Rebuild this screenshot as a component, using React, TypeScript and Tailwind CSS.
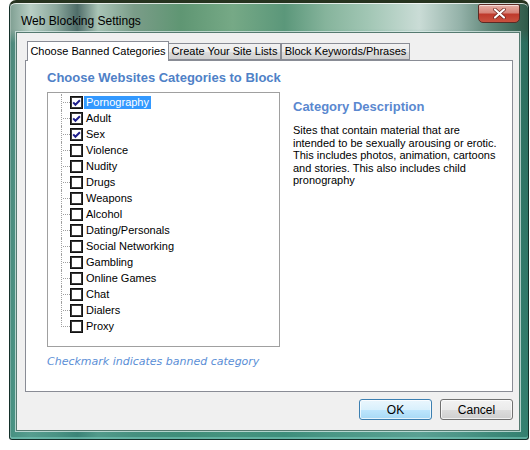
const categories = [
  "Pornography",
  "Adult",
  "Sex",
  "Violence",
  "Nudity",
  "Drugs",
  "Weapons",
  "Alcohol",
  "Dating/Personals",
  "Social Networking",
  "Gambling",
  "Online Games",
  "Chat",
  "Dialers",
  "Proxy",
];

const banned = ["Pornography", "Adult", "Sex"];

export default function App() {
  return (
    <div className="h-[450px] w-[530px] bg-white pl-[9px] font-['Liberation_Sans',Arial,sans-serif] text-black">
      <div className="flex h-[440px] w-[520px] flex-col rounded-t-[7px] rounded-b-[3px] border border-[#14302a] border-t-[3px] border-t-[#26331f] bg-[linear-gradient(180deg,rgba(0,0,0,0)_0px,rgba(0,0,0,0)_26px,rgba(40,120,106,0.6)_40px,rgba(52,140,124,0.75)_100%),linear-gradient(90deg,#7f9f92_0%,#b9cfc5_4%,#8aa79c_9%,#4f6d69_13%,#a9c4b6_17%,#7a9c88_24%,#5f9673_33%,#76a986_43%,#5b977a_53%,#86b49c_61%,#a1c6b4_69%,#cadcd6_79%,#93b1a8_87%,#5d8476_93%,#2f5a49_100%)] pr-[8px] pb-[8px] pl-[6px] shadow-[inset_0_1px_0_rgba(255,255,255,0.75),inset_1px_0_0_rgba(255,255,255,0.25),inset_0_-2px_0_rgba(120,200,185,0.6)]">
        <div className="flex h-[29px] shrink-0 items-start">
          <div className="pt-[11px] pl-[5px] text-[12px] leading-[14px] text-black">Web Blocking Settings</div>
          <button className="mt-[1px] ml-auto grid h-[19px] w-[42px] place-items-center rounded-t-[2px] rounded-b-[5px] border border-[#5b2a24] bg-[linear-gradient(180deg,#e7b0a6_0%,#d7857a_45%,#bf3a2c_55%,#c9523f_100%)] shadow-[inset_0_1px_0_rgba(255,255,255,0.6)]">
            <svg width="13" height="11" viewBox="0 0 13 11">
              <path d="M2 1.5 L11 9.5 M11 1.5 L2 9.5" stroke="#6b2018" strokeWidth="3.6" strokeLinecap="round" />
              <path d="M2 1.5 L11 9.5 M11 1.5 L2 9.5" stroke="#ffffff" strokeWidth="2.2" strokeLinecap="round" />
            </svg>
          </button>
        </div>

        <div className="flex flex-1 flex-col border border-[#557a70] bg-[#f0f0f0] pt-[8px] pr-[6px] pl-[8px] shadow-[0_0_0_1px_rgba(225,240,236,0.7)]">
          <div className="relative z-10 -mb-px flex h-[20px] items-end pl-[2px] text-[11px]">
            <div className="flex h-[20px] w-[142px] items-center justify-center border border-b-0 border-[#898c95] bg-white">
              Choose Banned Categories
            </div>
            <div className="mb-px flex h-[17px] w-[112px] items-center justify-center border border-l-0 border-[#898c95] bg-[linear-gradient(180deg,#f2f2f2_0%,#ebebeb_50%,#dddddd_51%,#cfcfcf_100%)]">
              Create Your Site Lists
            </div>
            <div className="mb-px flex h-[17px] w-[129px] items-center justify-center border border-[#898c95] bg-[linear-gradient(180deg,#f2f2f2_0%,#ebebeb_50%,#dddddd_51%,#cfcfcf_100%)]">
              Block Keywords/Phrases
            </div>
          </div>

          <div className="flex h-[332px] flex-col border border-[#898c95] bg-white pt-[9px] pl-[21px]">
            <div className="text-[13px] leading-[16px] font-bold text-[#4f81c7]">
              Choose Websites Categories to Block
            </div>
            <div className="mt-[6px] flex">
              <div className="flex flex-col">
                <div className="h-[255px] w-[233px] border border-[#a0a0a0] pt-px">
                  {categories.map((name, i) => (
                    <TreeRow
                      key={name}
                      label={name}
                      checked={banned.includes(name)}
                      selected={i === 0}
                      last={i === categories.length - 1}
                    />
                  ))}
                </div>
                <div className="mt-[8px] font-['DejaVu_Sans',Verdana,sans-serif] text-[11px] leading-[14px] text-[#5a8ed6] italic">
                  Checkmark indicates banned category
                </div>
              </div>
              <div className="ml-[13px] pt-[7px]">
                <div className="text-[13px] leading-[16px] font-bold text-[#5a88cf]">Category Description</div>
                <div className="mt-[9px] text-[11px] leading-[12.5px] whitespace-nowrap">
                  Sites that contain material that are
                  <br />
                  intended to be sexually arousing or erotic.
                  <br />
                  This includes photos, animation, cartoons
                  <br />
                  and stories. This also includes child
                  <br />
                  pronography
                </div>
              </div>
            </div>
          </div>

          <div className="mt-[7px] flex justify-end gap-[8px] text-[12px]">
            <button className="h-[21px] w-[73px] rounded-[3px] border border-[#3c7fb1] bg-[linear-gradient(180deg,#eaf6fd_0%,#d9f0fc_50%,#bee6fd_51%,#a7d9f5_100%)] shadow-[inset_0_0_0_1px_rgba(255,255,255,0.7)]">
              OK
            </button>
            <button className="h-[21px] w-[73px] rounded-[3px] border border-[#707070] bg-[linear-gradient(180deg,#f2f2f2_0%,#ebebeb_50%,#dddddd_51%,#cfcfcf_100%)] shadow-[inset_0_0_0_1px_rgba(255,255,255,0.7)]">
              Cancel
            </button>
          </div>
        </div>
      </div>
    </div>
  );
}

function TreeRow({
  label,
  checked,
  selected,
  last,
}: {
  label: string;
  checked: boolean;
  selected: boolean;
  last: boolean;
}) {
  return (
    <div className="flex h-4 items-center">
      <div className="relative h-full w-[22px] shrink-0">
        <div
          className={
            last
              ? "absolute top-0 left-[13px] h-[9px] border-l border-dotted border-[#a0a0a0]"
              : "absolute top-0 bottom-0 left-[13px] border-l border-dotted border-[#a0a0a0]"
          }
        />
        <div className="absolute top-[8px] left-[15px] w-[7px] border-t border-dotted border-[#a0a0a0]" />
      </div>
      <div className="grid size-[13px] shrink-0 place-items-center border border-[#111111] bg-white shadow-[inset_0_0_0_1px_#3a3a3a]">
        {checked ? (
          <svg width="11" height="11" viewBox="0 0 11 11">
            <path d="M2.2 5.4 L4.4 7.7 L8.9 3.2" fill="none" stroke="#1e1e8c" strokeWidth="2" />
          </svg>
        ) : null}
      </div>
      <span
        className={
          selected
            ? "ml-px bg-[#3399ff] px-[2px] text-[11px] leading-[13px] text-white"
            : "ml-px px-[2px] text-[11px] leading-[13px]"
        }
      >
        {label}
      </span>
    </div>
  );
}
